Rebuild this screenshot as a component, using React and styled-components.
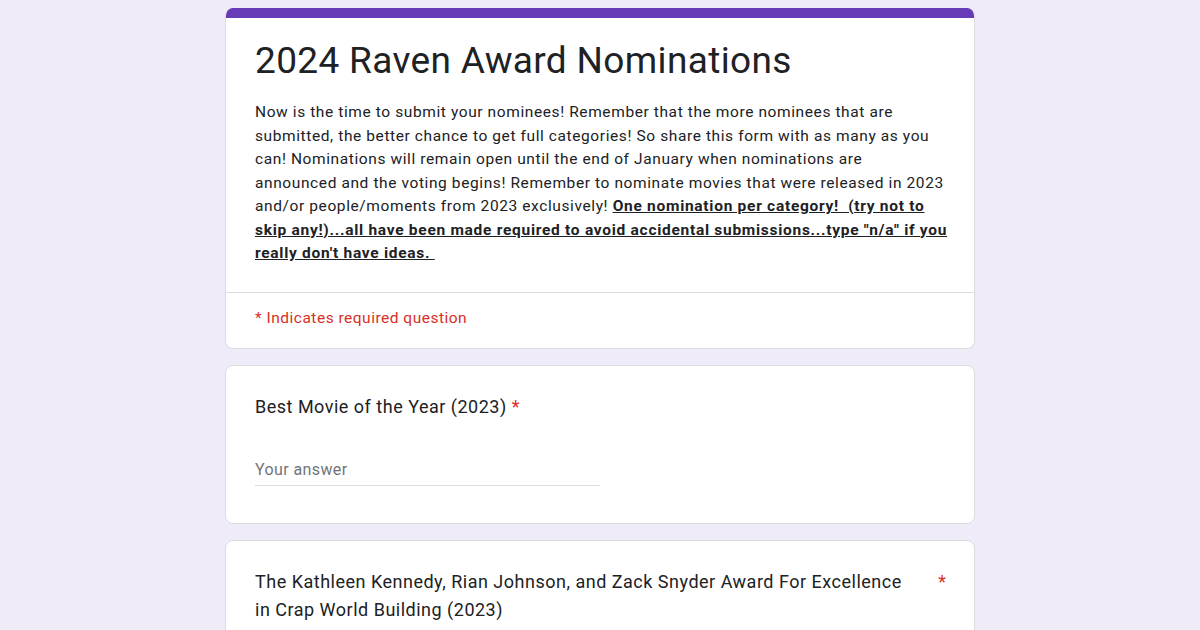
import React from "react";
import styled, { createGlobalStyle } from "styled-components";

const GlobalStyle = createGlobalStyle`
  html, body {
    margin: 0;
    padding: 0;
    background: #f0ebf8;
    font-family: Roboto, "Liberation Sans", sans-serif;
    color: #202124;
  }
`;

const questions = [
  {
    key: "best-movie",
    title: "Best Movie of the Year (2023)",
    inline: true,
  },
  {
    key: "crap-world",
    title:
      "The Kathleen Kennedy, Rian Johnson, and Zack Snyder Award For Excellence in Crap World Building (2023)",
    inline: false,
  },
];

function App() {
  return (
    <Page>
      <GlobalStyle />
      <Form>
        <HeaderCard>
          <TopBand />
          <HeaderBody>
            <Title>2024 Raven Award Nominations</Title>
            <Description>
              Now is the time to submit your nominees! Remember that the more nominees that are
              <br />
              submitted, the better chance to get full categories! So share this form with as many as you
              <br />
              can! Nominations will remain open until the end of January when nominations are
              <br />
              announced and the voting begins! Remember to nominate movies that were released in 2023
              <br />
              and/or people/moments from 2023 exclusively!{" "}
              <Strong>
                One nomination per category!&nbsp; (try not to
                <br />
                skip any!)...all have been made required to avoid accidental submissions...type "n/a" if you
                <br />
                really don't have ideas.&nbsp;
              </Strong>
            </Description>
          </HeaderBody>
          <RequiredNote>* Indicates required question</RequiredNote>
        </HeaderCard>

        {questions.map((q) => (
          <QuestionCard key={q.key}>
            <QuestionHead>
              <QuestionTitle>
                {q.title}
                {q.inline && <Star> *</Star>}
              </QuestionTitle>
              {!q.inline && <SideStar>*</SideStar>}
            </QuestionHead>
            <AnswerLine>Your answer</AnswerLine>
          </QuestionCard>
        ))}
      </Form>
    </Page>
  );
}

export default App;

const Page = styled.div`
  padding: 8px 0 24px;
  min-height: 630px;
  box-sizing: border-box;
`;

const Form = styled.div`
  width: 750px;
  margin: 0 auto;
  display: flex;
  flex-direction: column;
  gap: 16px;
`;

const Card = styled.div`
  background: #fff;
  border: 1px solid #dadce0;
  border-radius: 8px;
  overflow: hidden;
`;

const HeaderCard = styled(Card)`
  border-top: none;
`;

const TopBand = styled.div`
  height: 10px;
  background: #673ab7;
`;

const HeaderBody = styled.div`
  padding: 19px 20px 26px 29px;
  border-bottom: 1px solid #dadce0;
`;

const Title = styled.div`
  font-size: 37px;
  line-height: 48px;
  font-weight: 400;
  letter-spacing: 0.35px;
  color: #202124;
  margin-bottom: 16px;
`;

const Description = styled.div`
  font-size: 15.5px;
  line-height: 23.5px;
  letter-spacing: 0.6px;
  white-space: nowrap;
  color: #202124;
`;

const Strong = styled.span`
  font-weight: 700;
  letter-spacing: 0.72px;
  text-decoration: underline;
`;

const RequiredNote = styled.div`
  padding: 14px 29px 18px;
  font-size: 15.5px;
  line-height: 23px;
  letter-spacing: 0.5px;
  color: #d93025;
`;

const QuestionCard = styled(Card)`
  padding: 27px 24px 37px 29px;
`;

const QuestionHead = styled.div`
  display: flex;
  align-items: flex-start;
  gap: 26px;
`;

const QuestionTitle = styled.div`
  flex: 1;
  font-size: 18px;
  line-height: 28px;
  letter-spacing: 0.5px;
  color: #202124;
`;

const Star = styled.span`
  color: #d93025;
`;

const SideStar = styled.span`
  color: #d93025;
  font-size: 18px;
  line-height: 28px;
  padding-right: 4px;
`;

const AnswerLine = styled.div`
  width: 345px;
  margin-top: 38px;
  padding-bottom: 4px;
  border-bottom: 1px solid #dadce0;
  font-size: 16px;
  line-height: 22px;
  color: #70757a;
  letter-spacing: 0.4px;
`;
